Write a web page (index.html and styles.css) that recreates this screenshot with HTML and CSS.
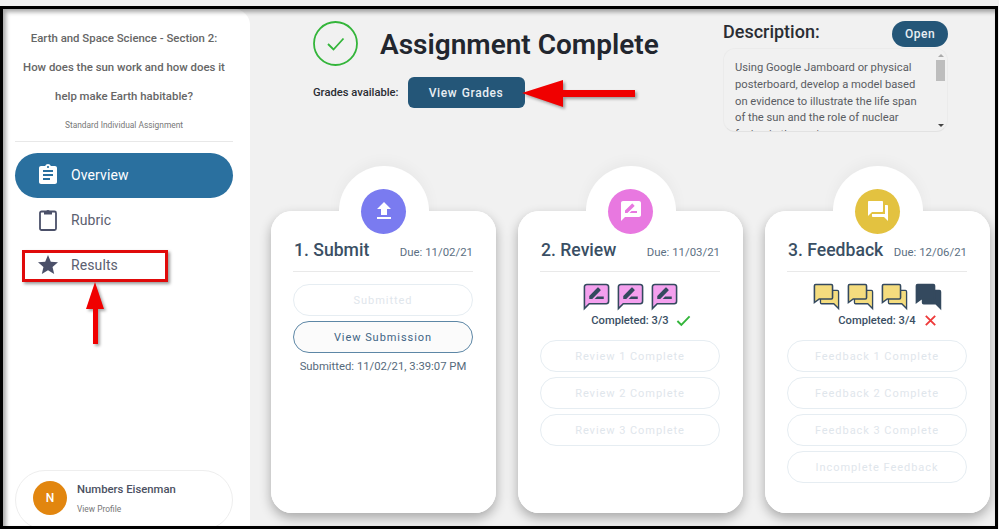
FILE: index.html
```html
<!DOCTYPE html>
<html lang="en">
<head>
<meta charset="utf-8">
<title>Assignment Complete</title>
<link rel="stylesheet" href="styles.css">
</head>
<body>
<svg class="defs" width="0" height="0" aria-hidden="true">
  <symbol id="rev" viewBox="0 0 24 24">
    <path class="bub" d="M20 2H4c-1.100 0-2 .9-2 2v18l4-4h14c1.100 0 2-.9 2-2V4c0-1.100-.9-2-2-2z"/>
    <path class="pen" d="M6 14v-2.470l6.880-6.880c.2-.2.510-.2.710 0l1.770 1.770c.2.2.2.510 0 .710L8.470 14H6zm12 0h-7.500l2-2H18v2z"/>
  </symbol>
  <symbol id="fb" viewBox="0 0 24 24">
    <path class="back" d="M8 7h13c.55 0 1 .45 1 1v14l-4-4H8c-.55 0-1-.45-1-1V8c0-.55.45-1 1-1z"/>
    <path class="front" d="M17 13V3c0-.55-.45-1-1-1H3c-.55 0-1 .45-1 1v14l4-3h10c.55 0 1-.45 1-1z"/>
  </symbol>
</svg>
<div class="frame">
  <aside class="sidebar">
    <div class="side-top">
      <h2 class="course">Earth and Space Science - Section 2:<br>How does the sun work and how does it<br>help make Earth habitable?</h2>
      <p class="kind">Standard Individual Assignment</p>
      <nav class="nav">
        <a class="nav-item active">
          <svg class="nav-icon" viewBox="0 0 24 24"><path d="M19 3h-4.180C14.400 1.840 13.300 1 12 1c-1.300 0-2.400.84-2.820 2H5c-1.100 0-2 .9-2 2v14c0 1.100.9 2 2 2h14c1.100 0 2-.9 2-2V5c0-1.100-.9-2-2-2zm-7 0c.55 0 1 .45 1 1s-.45 1-1 1-1-.45-1-1 .45-1 1-1zm2 14H7v-2h7v2zm3-4H7v-2h10v2zm0-4H7V7h10v2z"/></svg>
          <span>Overview</span>
        </a>
        <a class="nav-item">
          <svg class="nav-icon" viewBox="0 0 24 24"><rect class="clip-body" x="4" y="3.500" width="16" height="18.500" rx="1.500"/><path d="M8 6.500V3h2.300a1.900 1.900 0 013.400 0H16v3.500z"/></svg>
          <span>Rubric</span>
        </a>
        <a class="nav-item">
          <svg class="nav-icon" viewBox="0 0 24 24"><path d="M12 17.270L18.180 21l-1.640-7.030L22 9.240l-7.190-.61L12 2 9.190 8.630 2 9.240l5.460 4.730L5.820 21z"/></svg>
          <span>Results</span>
        </a>
      </nav>
    </div>
    <div class="profile">
      <div class="avatar">N</div>
      <div class="who">
        <div class="name">Numbers Eisenman</div>
        <div class="view">View Profile</div>
      </div>
    </div>
  </aside>

  <main class="main">
    <header class="header">
      <div class="status">
        <div class="title-row">
          <svg class="done" viewBox="0 0 45 45"><circle cx="22.500" cy="22.500" r="21.500"/><path d="M15 23l5.500 5.500 10-11"/></svg>
          <h1 class="title">Assignment Complete</h1>
        </div>
        <div class="grades-row">
          <span class="grades-label">Grades available:</span>
          <button class="grades-btn">View Grades</button>
        </div>
      </div>
      <section class="desc">
        <div class="desc-head">
          <h3 class="desc-title">Description:</h3>
          <button class="open-btn">Open</button>
        </div>
        <div class="desc-box">
          <p class="desc-text">Using Google Jamboard or physical posterboard, develop a model based on evidence to illustrate the life span of the sun and the role of nuclear fusion in the sun's</p>
          <div class="scroll">
            <span class="sc-up"></span>
            <span class="sc-thumb"></span>
            <span class="sc-down"></span>
          </div>
        </div>
      </section>
    </header>

    <div class="cards">
      <article class="card">
        <div class="badge badge-submit">
          <svg viewBox="0 0 24 24"><path d="M9 16h6v-6h4l-7-7-7 7h4v6zm-4 2h14v2H5v-2z"/></svg>
        </div>
        <div class="card-head"><h3>1. Submit</h3><span class="due">Due: 11/02/21</span></div>
        <div class="stack first">
          <button class="pill off">Submitted</button>
          <button class="pill on">View Submission</button>
        </div>
        <p class="stamp">Submitted: 11/02/21, 3:39:07 PM</p>
      </article>

      <article class="card">
        <div class="badge badge-review">
          <svg viewBox="0 0 24 24"><path d="M20 2H4c-1.100 0-1.990.9-1.990 2L2 22l4-4h14c1.100 0 2-.9 2-2V4c0-1.100-.9-2-2-2zM6 14v-2.470l6.880-6.880c.2-.2.510-.2.710 0l1.770 1.770c.2.2.2.510 0 .710L8.470 14H6zm12 0h-7.500l2-2H18v2z"/></svg>
        </div>
        <div class="card-head"><h3>2. Review</h3><span class="due">Due: 11/03/21</span></div>
        <div class="tokens">
          <svg class="tok review"><use href="#rev"/></svg>
          <svg class="tok review"><use href="#rev"/></svg>
          <svg class="tok review"><use href="#rev"/></svg>
        </div>
        <div class="count">Completed: 3/3
          <svg class="mark" viewBox="0 0 16 16"><path class="yes" d="M1.500 8.500l4.200 4.200L14.500 3.500"/></svg>
        </div>
        <div class="stack">
          <button class="pill off">Review 1 Complete</button>
          <button class="pill off">Review 2 Complete</button>
          <button class="pill off">Review 3 Complete</button>
        </div>
      </article>

      <article class="card">
        <div class="badge badge-feedback">
          <svg viewBox="0 0 24 24"><path d="M21 6h-2v9H6v2c0 .55.45 1 1 1h11l4 4V7c0-.55-.45-1-1-1zm-4 6V3c0-.55-.45-1-1-1H3c-.55 0-1 .45-1 1v14l4-4h10c.55 0 1-.45 1-1z"/></svg>
        </div>
        <div class="card-head"><h3>3. Feedback</h3><span class="due">Due: 12/06/21</span></div>
        <div class="tokens">
          <svg class="tok feedback"><use href="#fb"/></svg>
          <svg class="tok feedback"><use href="#fb"/></svg>
          <svg class="tok feedback"><use href="#fb"/></svg>
          <svg class="tok feedback dark"><use href="#fb"/></svg>
        </div>
        <div class="count">Completed: 3/4
          <svg class="mark" viewBox="0 0 16 16"><path class="no" d="M3 3l10 10M13 3L3 13"/></svg>
        </div>
        <div class="stack">
          <button class="pill off">Feedback 1 Complete</button>
          <button class="pill off">Feedback 2 Complete</button>
          <button class="pill off">Feedback 3 Complete</button>
          <button class="pill off">Incomplete Feedback</button>
        </div>
      </article>
    </div>
  </main>

  <div class="edge-shadow"></div>
</div>

<div class="callout-box"></div>
<svg class="arrow arrow-up" viewBox="0 0 22 66"><path d="M9 0L18 27H12V62H7V27H0z"/></svg>
<svg class="arrow arrow-left" viewBox="0 0 116 30"><path d="M0 14L41 1V11H113V18H41V28z"/></svg>
</body>
</html>
```
FILE: styles.css
```css
* { box-sizing: border-box; }
html, body { margin: 0; padding: 0; }
body {
  width: 999px;
  height: 529px;
  overflow: hidden;
  background: #f1f1f1;
  font-family: Roboto, "Liberation Sans", sans-serif;
  position: relative;
  padding-top: 6px;
}
.defs { position: absolute; }
h1, h2, h3, p { margin: 0; }
button { font-family: inherit; }

.frame {
  width: 998px;
  height: 523px;
  border: 3px solid #000;
  display: flex;
  background: #f1f1f1;
  position: relative;
  overflow: hidden;
}
.edge-shadow {
  position: absolute;
  inset: 0;
  pointer-events: none;
  box-shadow: inset 3px 3px 4px rgba(60, 60, 60, .45);
}

/* Sidebar */
.sidebar {
  width: 247px;
  flex: none;
  background: #fff;
  border-radius: 0 16px 0 0;
  padding: 15px 17px 0 12px;
  display: flex;
  flex-direction: column;
  justify-content: space-between;
}
.course {
  font-size: 11.400px;
  font-weight: 500;
  line-height: 29px;
  color: #666;
  text-align: center;
}
.kind {
  margin-top: 9px;
  font-size: 8.400px;
  line-height: 11px;
  color: #777;
  text-align: center;
  padding-bottom: 10px;
  border-bottom: 1px solid #e8e8e8;
}
.nav { margin-top: 11px; display: flex; flex-direction: column; }
.nav-item {
  height: 45px;
  display: flex;
  align-items: center;
  gap: 11px;
  padding-left: 21px;
  padding-bottom: 1px;
  border-radius: 23px;
  font-size: 14px;
  color: #5b6070;
  letter-spacing: .1px;
}
.nav-icon { width: 24px; height: 24px; fill: #4b5069; flex: none; }
.nav-item.active { background: #2a709f; color: #fff; }
.nav-item.active .nav-icon { fill: #fff; }
.nav-icon .clip-body { fill: none; stroke: #4b5069; stroke-width: 1.800; }

.profile {
  height: 60px;
  margin-bottom: -4px;
  flex: none;
  border: 1px solid #eee;
  border-radius: 30px;
  display: flex;
  align-items: flex-start;
  padding: 10px 0 0 17px;
  gap: 10px;
}
.avatar {
  width: 34px;
  height: 34px;
  border-radius: 50%;
  background: #e2860f;
  color: #fff;
  font-size: 12px;
  font-weight: 500;
  display: flex;
  align-items: center;
  justify-content: center;
  flex: none;
}
.name { font-size: 11.300px; font-weight: 500; color: #4c5162; line-height: 16px; margin-top: 1px; }
.view { font-size: 8.400px; color: #777; line-height: 11px; margin-top: 6px; }

/* Main */
.main { flex: 1; min-width: 0; }
.header { height: 202px; display: flex; padding: 12px 0 0 63px; }
.status { width: 410px; flex: none; }
.title-row { display: flex; align-items: center; gap: 22px; height: 45px; }
.done { width: 45px; height: 45px; fill: none; flex: none; stroke: #33b53a; stroke-width: 1.800; }
.title { font-size: 28px; font-weight: 600; color: #22262e; white-space: nowrap; padding-top: 1px; }
.grades-row { display: flex; align-items: center; gap: 9px; margin-top: 11px; }
.grades-label { font-size: 11.200px; font-weight: 500; color: #2a2d33; }
.grades-btn {
  width: 117px;
  height: 31px;
  border: 0;
  border-radius: 6px;
  background: #245678;
  color: #e8eef3;
  font-size: 12px;
  font-weight: 500;
  letter-spacing: .6px;
  word-spacing: 1px;
}
.desc { width: 225px; flex: none; }
.desc-head { display: flex; justify-content: space-between; height: 27px; }
.desc-title { font-size: 18px; font-weight: 500; color: #2a2d33; line-height: 22px; }
.open-btn {
  width: 56px;
  height: 26px;
  border: 0;
  border-radius: 13px;
  background: #245678;
  color: #e8eef3;
  font-size: 12px;
  font-weight: 500;
  letter-spacing: .5px;
}
.desc-box {
  position: relative;
  height: 84px;
  overflow: hidden;
  border: 1px solid #ebebeb;
  border-bottom-color: #e2e2e2;
  border-radius: 12px;
  padding: 11px 28px 0 11px;
}
.desc-text { font-size: 11.200px; line-height: 16.800px; color: #5a5d63; }
.scroll {
  position: absolute;
  top: 0;
  right: 1px;
  bottom: 0;
  width: 10px;
}
.sc-up, .sc-down, .sc-thumb { position: absolute; left: 0; }
.sc-up {
  top: 5px; left: 2px;
  border: 3px solid transparent;
  border-top: 0;
  border-bottom: 3px solid #aaa;
}
.sc-down {
  bottom: 4px; left: 2px;
  border: 3px solid transparent;
  border-bottom: 0;
  border-top: 3px solid #444;
}
.sc-thumb { top: 11px; width: 9px; height: 21px; background: #bdbdbd; }

/* Cards */
.cards { display: flex; gap: 22px; padding-left: 21px; }
.card {
  position: relative;
  width: 225px;
  height: 302px;
  background: #fff;
  border-radius: 21px;
  padding: 28px 23px 0 22px;
  box-shadow: 0 5px 12px rgba(0, 0, 0, .3);
}
.card::before {
  content: "";
  position: absolute;
  left: 67.500px;
  top: -45px;
  width: 90px;
  height: 90px;
  border-radius: 50%;
  background: #fff;
  box-shadow: 0 -4px 14px rgba(0, 0, 0, .04);
}
.card::after {
  content: "";
  position: absolute;
  inset: 0;
  border-radius: 21px;
  background: #fff;
}
.badge {
  position: absolute;
  z-index: 2;
  left: 90px;
  top: -22.500px;
  width: 45px;
  height: 45px;
  border-radius: 50%;
  display: flex;
  align-items: center;
  justify-content: center;
}
.badge svg { width: 24px; height: 24px; fill: #fff; }
.badge-submit { background: #7a7bf0; }
.badge-review { background: #e878e0; }
.badge-feedback { background: #e3c240; }
.card-head, .stack, .tokens, .count, .stamp { position: relative; z-index: 1; }
.card-head {
  display: flex;
  justify-content: space-between;
  align-items: baseline;
  height: 33px;
  border-bottom: 1px solid #e9e9e9;
  white-space: nowrap;
}
.card-head h3 { font-size: 17.600px; font-weight: 500; color: #3a4f64; line-height: 22px; margin-left: 1px; }
.due { font-size: 11.400px; color: #5c7083; }
.stack { display: flex; flex-direction: column; gap: 5px; margin-top: 12px; }
.pill {
  display: block;
  width: 180px;
  height: 32px;
  border-radius: 16px;
  background: #fff;
  font-size: 11px;
  letter-spacing: .95px;
  padding: 0;
}
.pill.off { border: 1px solid #e6edf2; color: #dfe6ec; }
.pill.on { border: 1px solid #5d87a6; color: #3f6585; background: #fbfbfb; }
.stamp { margin-top: 6px; text-align: center; font-size: 11.300px; color: #566a7c; line-height: 15px; }
.tokens { display: flex; justify-content: center; gap: 5px; margin-top: 10px; height: 28px; }
.tok { width: 29px; height: 29px; overflow: visible; flex: none; }
.review { --fill: #f4a0ee; }
.feedback { --fill: #f4dc7e; }
.feedback.dark { --fill: #34495e; }
.bub { fill: var(--fill); stroke: #34495e; stroke-width: 1.300; }
.pen { fill: #34495e; }
.back { fill: var(--fill); stroke: #34495e; stroke-width: 1.100; }
.front { fill: var(--fill); stroke: #34495e; stroke-width: 1.300; }
.count {
  display: flex;
  justify-content: center;
  align-items: center;
  gap: 7px;
  margin-top: 3px;
  height: 15px;
  font-size: 11.200px;
  font-weight: 500;
  color: #3a4f64;
}
.mark { width: 15px; height: 15px; margin-right: -22px; fill: none; stroke-width: 2; }
.yes { stroke: #33b53a; }
.no { stroke: #ee3a3a; }

/* Annotations */
.callout-box {
  position: absolute;
  left: 22px;
  top: 250px;
  width: 146px;
  height: 32px;
  border: 3px solid #e00a0a;
  box-shadow: 2px 2px 3px rgba(0, 0, 0, .4);
}
.arrow { position: absolute; fill: #f00000; filter: drop-shadow(2px 2px 1.500px rgba(0, 0, 0, .35)); }
.arrow-up { left: 86px; top: 282px; width: 22px; height: 66px; }
.arrow-left { left: 522px; top: 79px; width: 116px; height: 30px; }
```
